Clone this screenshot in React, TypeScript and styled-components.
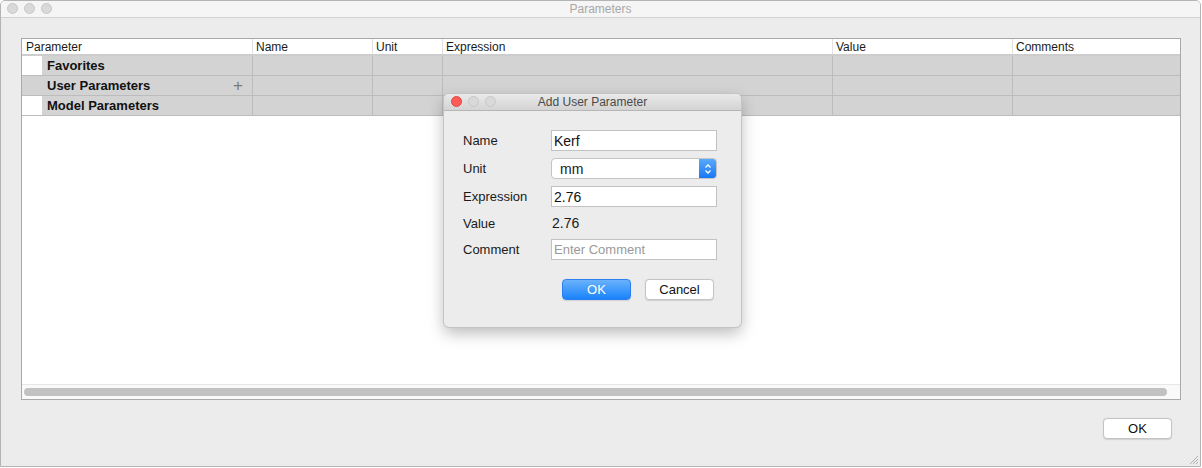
import React from 'react'
import styled, { createGlobalStyle } from 'styled-components'

const Global = createGlobalStyle`
  html, body {
    margin: 0;
    padding: 0;
    background: #ffffff;
    font-family: "Liberation Sans", Arial, sans-serif;
  }
`

const Window = styled.div`
  position: relative;
  width: 1199px;
  height: 465px;
  border: 1px solid #b4b4b4;
  border-radius: 5px 5px 0 0;
  background: #ececec;
  display: flex;
  flex-direction: column;
  overflow: hidden;
`

const TitleBar = styled.div<{ $active?: boolean }>`
  position: relative;
  height: 16px;
  flex: none;
  display: flex;
  align-items: center;
  justify-content: center;
  background: ${p => (p.$active ? 'linear-gradient(#e9e9e9, #d4d4d4)' : '#f5f5f5')};
  border-bottom: 1px solid ${p => (p.$active ? '#b6b6b6' : '#d2d2d2')};
  font-size: 12px;
  color: ${p => (p.$active ? '#4a4a4a' : '#a8a8a8')};
`

const Lights = styled.div<{ $left: number }>`
  position: absolute;
  left: ${p => p.$left}px;
  top: 2px;
  display: flex;
  gap: 6px;
`

const Light = styled.span<{ $color?: string }>`
  width: 11px;
  height: 11px;
  border-radius: 50%;
  box-sizing: border-box;
  background: ${p => p.$color ?? '#d9d9d9'};
  border: 1px solid ${p => (p.$color ? '#e2463f' : '#c6c6c6')};
`

const Body = styled.div`
  flex: 1;
  display: flex;
  flex-direction: column;
  padding: 20px 20px 0 20px;
`

const Table = styled.div`
  width: 1158px;
  height: 360px;
  border: 1px solid #a9a9a9;
  background: #ffffff;
  display: flex;
  flex-direction: column;
`

const cols = '230px 120px 70px 390px 180px 168px'

const HeaderRow = styled.div`
  display: grid;
  grid-template-columns: ${cols};
  height: 15px;
  border-bottom: 2px solid #cdcdcd;
  font-size: 12px;
  color: #1a1a1a;
`

const HeadCell = styled.div<{ $first?: boolean }>`
  display: flex;
  align-items: center;
  padding-left: ${p => (p.$first ? 4 : 3)}px;
  border-left: ${p => (p.$first ? 'none' : '1px solid #e2e2e2')};
`

const Row = styled.div`
  display: grid;
  grid-template-columns: 20px 210px 120px 70px 390px 180px 168px;
  height: 19px;
  border-bottom: 1px solid #bcbcbc;
`

const Indent = styled.div<{ $shaded?: boolean }>`
  background: ${p => (p.$shaded ? '#d3d3d3' : '#ffffff')};
`

const GroupCell = styled.div`
  background: #d3d3d3;
  display: flex;
  align-items: center;
  justify-content: space-between;
  padding: 0 9px 0 5px;
  font-size: 13px;
  font-weight: bold;
  color: #111;
`

const Cell = styled.div`
  background: #d3d3d3;
  border-left: 1px solid #bcbcbc;
`

const Plus = styled.span`
  font-size: 17px;
  font-weight: normal;
  color: #7a7a7a;
  line-height: 1;
`

const Empty = styled.div`
  flex: 1;
`

const ScrollTrack = styled.div`
  height: 14px;
  border-top: 1px solid #e6e6e6;
  background: #f9f9f9;
  display: flex;
  align-items: center;
  padding: 0 13px 0 2px;
`

const Thumb = styled.div`
  flex: 1;
  height: 8px;
  border-radius: 4px;
  background: #c1c1c1;
`

const Footer = styled.div`
  display: flex;
  justify-content: flex-end;
  padding: 18px 8px 0 0;
`

const Button = styled.button<{ $primary?: boolean }>`
  width: 69px;
  height: 21px;
  box-sizing: border-box;
  border-radius: 4px;
  font-family: inherit;
  font-size: 13px;
  padding: 0;
  border: 1px solid ${p => (p.$primary ? '#2d7ff3' : '#c4c4c4')};
  background: ${p => (p.$primary ? 'linear-gradient(#6ab2fb, #1a83fb)' : '#ffffff')};
  color: ${p => (p.$primary ? '#ffffff' : '#111')};
  box-shadow: 0 0.5px 1px rgba(0, 0, 0, 0.12);
`

const Grip = styled.svg`
  position: absolute;
  right: 1px;
  bottom: 1px;
`

const Dialog = styled.div`
  position: absolute;
  left: 443px;
  top: 93px;
  width: 297px;
  height: 233px;
  border-radius: 5px;
  background: #ececec;
  box-shadow: 0 0 0 1px #c4c4c4, 0 6px 16px rgba(0, 0, 0, 0.28);
  display: flex;
  flex-direction: column;
  overflow: hidden;
`

const Form = styled.div`
  display: grid;
  grid-template-columns: 88px 166px;
  grid-template-rows: 21px 21px 21px 18px 21px;
  row-gap: 7px;
  padding: 19px 0 0 19px;
  font-size: 13px;
  color: #1a1a1a;
`

const Label = styled.div`
  display: flex;
  align-items: center;
`

const Value = styled.div`
  display: flex;
  align-items: center;
  padding-left: 1px;
  font-size: 14px;
`

const TextInput = styled.div<{ $placeholder?: boolean }>`
  box-sizing: border-box;
  height: 21px;
  border: 1px solid #c2c2c2;
  background: #ffffff;
  display: flex;
  align-items: center;
  padding-left: 2px;
  font-size: ${p => (p.$placeholder ? 13 : 14)}px;
  color: ${p => (p.$placeholder ? '#9a9a9a' : '#111')};
`

const Select = styled.div`
  box-sizing: border-box;
  height: 21px;
  border: 1px solid #c4c4c4;
  border-radius: 4px;
  background: #ffffff;
  display: flex;
  align-items: center;
  justify-content: space-between;
  padding-left: 8px;
  font-size: 14px;
  overflow: hidden;
`

const Stepper = styled.div`
  width: 17px;
  height: 100%;
  background: linear-gradient(#5aa9fb, #1879f5);
  display: flex;
  align-items: center;
  justify-content: center;
`

const Actions = styled.div`
  display: flex;
  justify-content: flex-end;
  gap: 14px;
  padding: 19px 27px 0 0;
`

export default function App() {
  return (
    <>
      <Global />
      <Window>
        <TitleBar>
          <Lights $left={6}>
            <Light />
            <Light />
            <Light />
          </Lights>
          Parameters
        </TitleBar>
        <Body>
          <Table>
            <HeaderRow>
              <HeadCell $first>Parameter</HeadCell>
              <HeadCell>Name</HeadCell>
              <HeadCell>Unit</HeadCell>
              <HeadCell>Expression</HeadCell>
              <HeadCell>Value</HeadCell>
              <HeadCell>Comments</HeadCell>
            </HeaderRow>
            {['Favorites', 'User Parameters', 'Model Parameters'].map((g, i) => (
              <Row key={g}>
                <Indent $shaded={i === 1} />
                <GroupCell>
                  {g}
                  {i === 1 && <Plus>+</Plus>}
                </GroupCell>
                <Cell />
                <Cell />
                <Cell />
                <Cell />
                <Cell />
              </Row>
            ))}
            <Empty />
            <ScrollTrack>
              <Thumb />
            </ScrollTrack>
          </Table>
          <Footer>
            <Button>OK</Button>
          </Footer>
        </Body>
        <Grip width="12" height="12" viewBox="0 0 12 12">
          <path d="M11 3 L3 11 M11 6 L6 11 M11 9 L9 11" stroke="#b0b0b0" strokeWidth="1" />
        </Grip>

        <Dialog>
          <TitleBar $active>
            <Lights $left={7}>
              <Light $color="#fc5b57" />
              <Light />
              <Light />
            </Lights>
            Add User Parameter
          </TitleBar>
          <Form>
            <Label>Name</Label>
            <TextInput>Kerf</TextInput>
            <Label>Unit</Label>
            <Select>
              mm
              <Stepper>
                <svg width="8" height="12" viewBox="0 0 8 12">
                  <path d="M1.5 4.5 L4 2 L6.5 4.5 M1.5 7.5 L4 10 L6.5 7.5" stroke="#fff" strokeWidth="1.3" fill="none" />
                </svg>
              </Stepper>
            </Select>
            <Label>Expression</Label>
            <TextInput>2.76</TextInput>
            <Label>Value</Label>
            <Value>2.76</Value>
            <Label>Comment</Label>
            <TextInput $placeholder>Enter Comment</TextInput>
          </Form>
          <Actions>
            <Button $primary>OK</Button>
            <Button>Cancel</Button>
          </Actions>
        </Dialog>
      </Window>
    </>
  )
}
